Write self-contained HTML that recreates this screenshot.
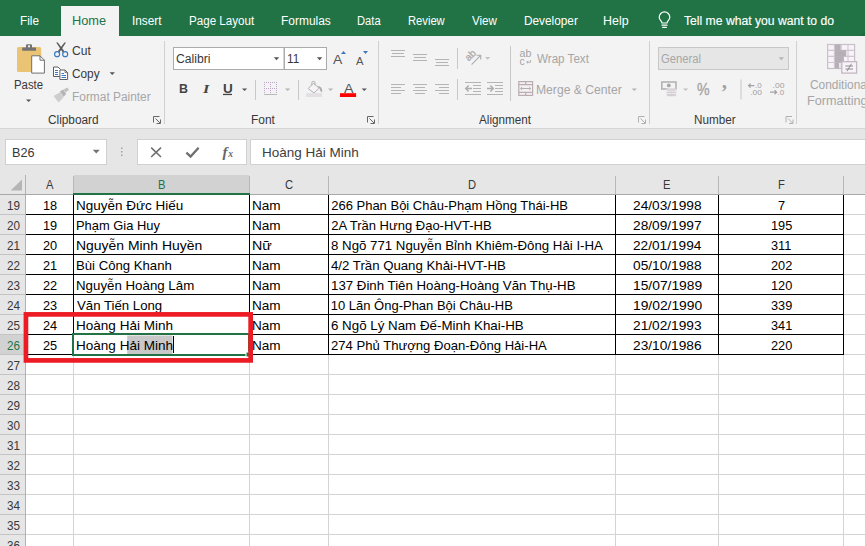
<!DOCTYPE html>
<html lang="vi"><head><meta charset="utf-8"><title>Excel</title>
<style>
html,body{margin:0;padding:0;}
body{width:865px;height:546px;overflow:hidden;background:#e6e6e6;font-family:"Liberation Sans", sans-serif;position:relative;}
.t{position:absolute;white-space:nowrap;transform-origin:0 0;}
.a{position:absolute;}
</style></head>
<body>
<div class="a" style="left:0px;top:0px;width:865px;height:36px;background:#217346;"></div>
<div class="a" style="left:61px;top:6px;width:58px;height:30px;background:#f3f3f3;"></div>
<div class="a" style="left:0px;top:36px;width:865px;height:92px;background:#f3f3f3;"></div>
<div class="a" style="left:0px;top:128px;width:865px;height:1px;background:#d6d6d6;"></div>
<div class="a" style="left:5px;top:139px;width:102px;height:26px;background:#fff;box-sizing:border-box;border:1px solid #d0d0d0;"></div>
<div class="a" style="left:137px;top:139px;width:110px;height:26px;background:#fff;box-sizing:border-box;border:1px solid #d0d0d0;"></div>
<div class="a" style="left:250px;top:139px;width:615px;height:26px;background:#fff;box-sizing:border-box;border:1px solid #d0d0d0;border-right:none;"></div>
<div class="a" style="left:26px;top:195px;width:839px;height:351px;background:#fff;"></div>
<div class="a" style="left:0px;top:175px;width:865px;height:20px;background:#e6e6e6;"></div>
<div class="a" style="left:0px;top:195px;width:26px;height:351px;background:#e6e6e6;"></div>
<div class="a" style="left:74px;top:175px;width:175px;height:20px;background:#d2d2d2;"></div>
<div class="a" style="left:0px;top:335px;width:25px;height:19px;background:#d2d2d2;"></div>
<svg class="a" style="left:0;top:0" width="865" height="546" viewBox="0 0 865 546" shape-rendering="auto">
<rect x="73" y="195" width="1" height="351" fill="#d4d4d4"/>
<rect x="249" y="195" width="1" height="351" fill="#d4d4d4"/>
<rect x="328" y="195" width="1" height="351" fill="#d4d4d4"/>
<rect x="615" y="195" width="1" height="351" fill="#d4d4d4"/>
<rect x="718" y="195" width="1" height="351" fill="#d4d4d4"/>
<rect x="843" y="195" width="1" height="351" fill="#d4d4d4"/>
<rect x="26" y="214" width="839" height="1" fill="#d4d4d4"/>
<rect x="26" y="234" width="839" height="1" fill="#d4d4d4"/>
<rect x="26" y="254" width="839" height="1" fill="#d4d4d4"/>
<rect x="26" y="274" width="839" height="1" fill="#d4d4d4"/>
<rect x="26" y="294" width="839" height="1" fill="#d4d4d4"/>
<rect x="26" y="314" width="839" height="1" fill="#d4d4d4"/>
<rect x="26" y="334" width="839" height="1" fill="#d4d4d4"/>
<rect x="26" y="354" width="839" height="1" fill="#d4d4d4"/>
<rect x="26" y="374" width="839" height="1" fill="#d4d4d4"/>
<rect x="26" y="394" width="839" height="1" fill="#d4d4d4"/>
<rect x="26" y="414" width="839" height="1" fill="#d4d4d4"/>
<rect x="26" y="434" width="839" height="1" fill="#d4d4d4"/>
<rect x="26" y="454" width="839" height="1" fill="#d4d4d4"/>
<rect x="26" y="474" width="839" height="1" fill="#d4d4d4"/>
<rect x="26" y="494" width="839" height="1" fill="#d4d4d4"/>
<rect x="26" y="514" width="839" height="1" fill="#d4d4d4"/>
<rect x="26" y="534" width="839" height="1" fill="#d4d4d4"/>
<rect x="26" y="554" width="839" height="1" fill="#d4d4d4"/>
<rect x="0" y="214" width="25" height="1" fill="#c4c4c4"/>
<rect x="0" y="234" width="25" height="1" fill="#c4c4c4"/>
<rect x="0" y="254" width="25" height="1" fill="#c4c4c4"/>
<rect x="0" y="274" width="25" height="1" fill="#c4c4c4"/>
<rect x="0" y="294" width="25" height="1" fill="#c4c4c4"/>
<rect x="0" y="314" width="25" height="1" fill="#c4c4c4"/>
<rect x="0" y="334" width="25" height="1" fill="#c4c4c4"/>
<rect x="0" y="354" width="25" height="1" fill="#c4c4c4"/>
<rect x="0" y="374" width="25" height="1" fill="#c4c4c4"/>
<rect x="0" y="394" width="25" height="1" fill="#c4c4c4"/>
<rect x="0" y="414" width="25" height="1" fill="#c4c4c4"/>
<rect x="0" y="434" width="25" height="1" fill="#c4c4c4"/>
<rect x="0" y="454" width="25" height="1" fill="#c4c4c4"/>
<rect x="0" y="474" width="25" height="1" fill="#c4c4c4"/>
<rect x="0" y="494" width="25" height="1" fill="#c4c4c4"/>
<rect x="0" y="514" width="25" height="1" fill="#c4c4c4"/>
<rect x="0" y="534" width="25" height="1" fill="#c4c4c4"/>
<rect x="0" y="554" width="25" height="1" fill="#c4c4c4"/>
<rect x="25" y="175" width="1" height="371" fill="#b2b2b2"/>
<rect x="73" y="176" width="1" height="19" fill="#b8b8b8"/>
<rect x="249" y="176" width="1" height="19" fill="#b8b8b8"/>
<rect x="328" y="176" width="1" height="19" fill="#b8b8b8"/>
<rect x="615" y="176" width="1" height="19" fill="#b8b8b8"/>
<rect x="718" y="176" width="1" height="19" fill="#b8b8b8"/>
<rect x="843" y="176" width="1" height="19" fill="#b8b8b8"/>
<rect x="0" y="194" width="865" height="1" fill="#a8a8a8"/>
<path d="M22 179.6 L22 190.6 L10.6 190.6 Z" fill="#b5b5b5"/>
<rect x="73" y="195" width="1" height="160" fill="#000"/>
<rect x="249" y="195" width="1" height="160" fill="#000"/>
<rect x="328" y="195" width="1" height="160" fill="#000"/>
<rect x="615" y="195" width="1" height="160" fill="#000"/>
<rect x="718" y="195" width="1" height="160" fill="#000"/>
<rect x="843" y="195" width="1" height="160" fill="#000"/>
<rect x="26" y="214" width="818" height="1" fill="#000"/>
<rect x="26" y="234" width="818" height="1" fill="#000"/>
<rect x="26" y="254" width="818" height="1" fill="#000"/>
<rect x="26" y="274" width="818" height="1" fill="#000"/>
<rect x="26" y="294" width="818" height="1" fill="#000"/>
<rect x="26" y="314" width="818" height="1" fill="#000"/>
<rect x="26" y="334" width="818" height="1" fill="#000"/>
<rect x="26" y="354" width="818" height="1" fill="#000"/>
<rect x="73" y="193" width="177" height="2" fill="#217346"/>
<rect x="127.2" y="335.5" width="45.3" height="18.5" fill="#c8c8c8"/>
<rect x="73" y="334" width="176" height="21" fill="none" stroke="#217346" stroke-width="2"/>
<rect x="246" y="352" width="5" height="5" fill="#217346" stroke="#fff" stroke-width="1"/>
<g fill="none" stroke="#fff" stroke-width="1.2" stroke-linecap="round"><path d="M662 23 C662 21 659.2 20 659.2 17.2 A5.3 5.3 0 0 1 669.8 17.2 C669.8 20 667 21 667 23 Z"/><path d="M662 25.2 H667 M662.7 27.4 H666.3"/></g>
<clipPath id="gb"><rect x="0" y="0" width="865" height="36"/></clipPath><circle cx="869" cy="41" r="10" fill="#1d6a3f" clip-path="url(#gb)"/>
<rect x="164" y="41" width="1" height="83" fill="#d0d0d0"/>
<rect x="378" y="41" width="1" height="83" fill="#d0d0d0"/>
<rect x="649" y="41" width="1" height="83" fill="#d0d0d0"/>
<rect x="796" y="41" width="1" height="83" fill="#d0d0d0"/>
<rect x="17" y="47" width="24.2" height="25" rx="1.6" fill="#eac374"/>
<path d="M26 47.4 V45.4 Q26 44.2 27.2 44.2 H30.8 Q32 44.2 32 45.4 V47.4 H36 V50.8 H22.2 V47.4 Z" fill="#737373"/>
<rect x="28" y="45.4" width="2" height="1.9" fill="#f3f3f3"/>
<path d="M31.7 55.8 H40 L44.4 60.2 V73.1 H31.7 Z" fill="#fff" stroke="#6f6f6f" stroke-width="1"/>
<path d="M40 55.8 V60.2 H44.4" fill="none" stroke="#6f6f6f" stroke-width="1"/>
<path d="M26 99.4 L31.2 99.4 L28.6 102.1 Z" fill="#555"/>
<g fill="#5a5a5a"><path d="M56.2 42.6 L57.8 42.4 L64.4 51.2 L62.8 52.4 Z"/><path d="M66 42.6 L64.4 42.4 L57.8 51.2 L59.4 52.4 Z"/></g>
<g fill="none" stroke="#3b79c3" stroke-width="1.2"><circle cx="57.1" cy="54.2" r="2.5"/><circle cx="65.2" cy="54.2" r="2.5"/></g>
<path d="M53.5 67 H58 L60.5 69.5 V76.5 H53.5 Z" fill="#fff" stroke="#5f5f5f" stroke-width="1"/>
<path d="M59.9 70 H65 L67.6 72.6 V79.5 H59.9 Z" fill="#fff" stroke="#5f5f5f" stroke-width="1"/>
<path d="M65 70 V72.6 H67.6" fill="none" stroke="#5f5f5f" stroke-width=".8"/>
<g stroke="#3b79c3" stroke-width="1"><path d="M55 70.5 H58 M55 72.5 H58 M55 74.5 H58"/><path d="M61.5 73.5 H64 M61.5 75.5 H66 M61.5 77.5 H66"/></g>
<path d="M109.6 72.3 L114.9 72.3 L112.25 75 Z" fill="#555"/>
<path d="M53.6 96 L60 92.2 L63.6 97.2 L58.6 102.6 Z" fill="#cfcdcd"/>
<path d="M59.8 91.6 L63.2 89.6 L66.2 94 L63.6 96.8 Z" fill="#b5b5b5"/>
<path d="M63.6 89.6 L67.4 87.6 L69 90 L65.6 92.6 Z" fill="#c2c2c2"/>
<path d="M153.5 122.5 V116.5 H159.5" fill="none" stroke="#666" stroke-width="1"/>
<path d="M155.5 118.5 L160 123 M160.5 119.5 V123.5 H156.5" fill="none" stroke="#666" stroke-width="1"/>
<rect x="173.5" y="47.5" width="110.5" height="22" fill="#fff" stroke="#ababab"/>
<rect x="284.5" y="47.5" width="42" height="22" fill="#fff" stroke="#ababab"/>
<path d="M273.8 57.2 L279.2 57.2 L276.5 60.2 Z" fill="#555"/>
<path d="M316.9 57.2 L322.3 57.2 L319.6 60.2 Z" fill="#555"/>
<path d="M241.9 88.4 L247.2 88.4 L244.55 91.1 Z" fill="#555"/>
<path d="M285 88.4 L290.3 88.4 L287.65 91.1 Z" fill="#b4b4b4"/>
<path d="M328 88.4 L333.2 88.4 L330.6 91.1 Z" fill="#b4b4b4"/>
<path d="M361.6 88.4 L366.9 88.4 L364.25 91.1 Z" fill="#555"/>
<rect x="223" y="93.8" width="9" height="1.3" fill="#444"/>
<rect x="255" y="80" width="1" height="20" fill="#c8c8c8"/>
<rect x="298" y="80" width="1" height="20" fill="#c8c8c8"/>
<g stroke="#bfa6c8" stroke-width="1" stroke-dasharray="1 1" fill="none"><path d="M264 82.5 H277 M264 88.5 H277 M264.5 82 V94 M270.5 82 V94 M276.5 82 V94"/></g>
<rect x="264" y="94" width="13" height="1" fill="#b9b9b9"/>
<path d="M308.2 88.6 L313.4 83.2 L319.2 88.2 L314 93 Z" fill="#f6f2f6" stroke="#b2b2b2" stroke-width="1" stroke-linejoin="round"/>
<path d="M311.8 85.6 V82.8 Q311.8 81.3 313.4 81.3 Q315 81.3 315 82.9 V85.2" fill="none" stroke="#b2b2b2" stroke-width="1"/>
<path d="M317.6 85.8 Q322.8 86.4 322.2 92.4 Q319.8 91.6 319.6 88.4 Z" fill="#adadad"/>
<rect x="306.1" y="93.2" width="15.9" height="3.8" fill="#e3dfe3"/>
<path d="M341 53.9 L346 53.9 L343.5 51.1 Z" fill="#3b79c3"/>
<path d="M363 51.1 L368 51.1 L365.5 53.9 Z" fill="#3b79c3"/>
<rect x="340" y="93.2" width="16.1" height="3.8" fill="#ff0000"/>
<path d="M367.5 122.5 V116.5 H373.5" fill="none" stroke="#666" stroke-width="1"/>
<path d="M369.5 118.5 L374 123 M374.5 119.5 V123.5 H370.5" fill="none" stroke="#666" stroke-width="1"/>
<rect x="391" y="50" width="14" height="1" fill="#b4b4b4"/>
<rect x="392" y="53" width="12" height="1" fill="#b4b4b4"/>
<rect x="391" y="56" width="14" height="1" fill="#b4b4b4"/>
<rect x="413" y="54" width="14" height="1" fill="#b4b4b4"/>
<rect x="414" y="57" width="12" height="1" fill="#b4b4b4"/>
<rect x="413" y="60" width="14" height="1" fill="#b4b4b4"/>
<rect x="435" y="59" width="14" height="1" fill="#b4b4b4"/>
<rect x="436" y="62" width="12" height="1" fill="#b4b4b4"/>
<rect x="435" y="65" width="14" height="1" fill="#b4b4b4"/>
<rect x="457" y="48" width="1" height="21" fill="#c8c8c8"/>
<rect x="457" y="79" width="1" height="21" fill="#c8c8c8"/>
<rect x="510" y="46" width="1" height="55" fill="#c8c8c8"/>
<rect x="391" y="84" width="14" height="1" fill="#b4b4b4"/>
<rect x="413" y="84" width="14" height="1" fill="#b4b4b4"/>
<rect x="435" y="84" width="14" height="1" fill="#b4b4b4"/>
<rect x="391" y="87" width="10" height="1" fill="#b4b4b4"/>
<rect x="415" y="87" width="10" height="1" fill="#b4b4b4"/>
<rect x="439" y="87" width="10" height="1" fill="#b4b4b4"/>
<rect x="391" y="90" width="14" height="1" fill="#b4b4b4"/>
<rect x="413" y="90" width="14" height="1" fill="#b4b4b4"/>
<rect x="435" y="90" width="14" height="1" fill="#b4b4b4"/>
<rect x="391" y="93" width="10" height="1" fill="#b4b4b4"/>
<rect x="415" y="93" width="10" height="1" fill="#b4b4b4"/>
<rect x="439" y="93" width="10" height="1" fill="#b4b4b4"/>
<text x="0" y="0" font-size="10" fill="#a9a9a9" font-family="Liberation Sans, sans-serif" stroke="#a9a9a9" stroke-width=".25" transform="translate(468.8 61.6) rotate(-45)">ab</text>
<path d="M471.6 64.6 L480.4 55.6 M476.6 55.3 H480.7 V59.4" fill="none" stroke="#adadad" stroke-width="1.1"/>
<path d="M485 57 L490.3 57 L487.65 59.8 Z" fill="#c2c2c2"/>
<rect x="465" y="82" width="16" height="1" fill="#b4b4b4"/>
<rect x="465" y="94" width="16" height="1" fill="#b4b4b4"/>
<rect x="473" y="85" width="8" height="1" fill="#b4b4b4"/>
<rect x="473" y="88" width="8" height="1" fill="#b4b4b4"/>
<rect x="473" y="91" width="8" height="1" fill="#b4b4b4"/>
<path d="M472 88.5 H466 M468.6 85.6 L465.8 88.5 L468.6 91.4" fill="none" stroke="#adadad" stroke-width="1.5"/>
<rect x="487" y="82" width="16" height="1" fill="#b4b4b4"/>
<rect x="487" y="94" width="16" height="1" fill="#b4b4b4"/>
<rect x="495" y="85" width="8" height="1" fill="#b4b4b4"/>
<rect x="495" y="88" width="8" height="1" fill="#b4b4b4"/>
<rect x="495" y="91" width="8" height="1" fill="#b4b4b4"/>
<path d="M487 88.5 H493 M490.4 85.6 L493.2 88.5 L490.4 91.4" fill="none" stroke="#adadad" stroke-width="1.5"/>
<text x="519.6" y="57.4" font-size="10.5" fill="#a3a3a3" font-family="Liberation Sans, sans-serif" textLength="11.8" lengthAdjust="spacingAndGlyphs">ab</text>
<text x="519.6" y="64.9" font-size="10.5" fill="#a3a3a3" font-family="Liberation Sans, sans-serif">c</text>
<path d="M530.6 60.2 V62.2 H526.8 M528.2 60.9 L526.8 62.2 L528.2 63.5" fill="none" stroke="#adadad" stroke-width="1"/>
<g fill="#f7f0f3" stroke="#b7adb2" stroke-width="1.2"><rect x="518.8" y="81.6" width="13.8" height="13.8"/></g>
<path d="M518.8 84.6 H532.6 M518.8 92.4 H532.6 M525.7 81.6 V84.6 M525.7 92.4 V95.4" fill="none" stroke="#b7adb2" stroke-width="1.2"/>
<path d="M520.6 88.5 H530.8 M522.2 87 L520.6 88.5 L522.2 90 M529.2 87 L530.8 88.5 L529.2 90" fill="none" stroke="#b2b2b2" stroke-width="1"/>
<path d="M631.6 88.4 L637 88.4 L634.3 91.1 Z" fill="#b4b4b4"/>
<path d="M638.5 122.5 V116.5 H644.5" fill="none" stroke="#b0b0b0" stroke-width="1"/>
<path d="M640.5 118.5 L645 123 M645.5 119.5 V123.5 H641.5" fill="none" stroke="#b0b0b0" stroke-width="1"/>
<rect x="658.5" y="47.5" width="130" height="22" fill="#e6e6e6" stroke="#c8c8c8"/>
<path d="M778.7 57.2 L784 57.2 L781.35 60.2 Z" fill="#b4b4b4"/>
<rect x="661.8" y="82" width="14.2" height="7" fill="#f3f3f3" stroke="#b3b3b3" stroke-width="1.6"/>
<circle cx="668.8" cy="85.4" r="1.9" fill="#a6a6a6"/>
<g fill="#d4ced4" stroke="#f3f3f3" stroke-width=".7"><ellipse cx="671.4" cy="90.2" rx="5.4" ry="1.7"/><ellipse cx="671.4" cy="92.6" rx="5.4" ry="1.7"/><ellipse cx="671.4" cy="95" rx="5.4" ry="1.7"/></g>
<path d="M682.9 88.4 L688.2 88.4 L685.55 91.1 Z" fill="#c2c2c2"/>
<rect x="740.5" y="79.5" width="1" height="20.0" fill="#c8c8c8"/>
<text x="755" y="88" font-size="8" fill="#9e9e9e" font-family="Liberation Sans, sans-serif">.0</text>
<text x="750.2" y="95.2" font-size="8" fill="#9e9e9e" font-family="Liberation Sans, sans-serif" textLength="11.8" lengthAdjust="spacingAndGlyphs">.00</text>
<path d="M754.4 85.6 H748.6 M750.6 83.6 L748.6 85.6 L750.6 87.6" fill="none" stroke="#a3a3a3" stroke-width="1.3"/>
<text x="772.6" y="88" font-size="8" fill="#9e9e9e" font-family="Liberation Sans, sans-serif" textLength="11.8" lengthAdjust="spacingAndGlyphs">.00</text>
<text x="777.6" y="95.2" font-size="8" fill="#9e9e9e" font-family="Liberation Sans, sans-serif">.0</text>
<path d="M770 92.2 H776.6 M774.6 90.2 L776.6 92.2 L774.6 94.2" fill="none" stroke="#a3a3a3" stroke-width="1.3"/>
<text x="697" y="95" font-size="16" fill="#a3a3a3" stroke="#a3a3a3" stroke-width=".3" font-family="Liberation Sans, sans-serif" textLength="12.6" lengthAdjust="spacingAndGlyphs">%</text>
<text x="721.8" y="88.2" font-size="21" font-weight="bold" fill="#a3a3a3" font-family="Liberation Serif, serif">,</text>
<path d="M786.0 122.5 V116.5 H792.0" fill="none" stroke="#b0b0b0" stroke-width="1"/>
<path d="M788.0 118.5 L792.5 123 M793.0 119.5 V123.5 H789.0" fill="none" stroke="#b0b0b0" stroke-width="1"/>
<rect x="827.6" y="44.5" width="27" height="24" fill="#f8f3f8" stroke="#c8bfc8" stroke-width="1.2"/>
<path d="M827.6 50.4 H854.6 M827.6 56.4 H854.6 M827.6 62.5 H854.6 M834.4 44.5 V68.5 M841.2 44.5 V68.5 M848 44.5 V68.5" stroke="#cfc6cf" stroke-width="1.1" fill="none"/>
<g fill="#b6b0b6"><rect x="835" y="44.5" width="5.6" height="5.8"/><rect x="835" y="50.3" width="11.2" height="6"/><rect x="835" y="56.3" width="8.9" height="6.2"/><rect x="835" y="62.5" width="4.2" height="6"/></g>
<rect x="841.8" y="61.7" width="14.8" height="11.4" fill="#f8f3f8" stroke="#c2b8c2" stroke-width="1.3"/>
<path d="M845.4 66 H853 M845.4 69 H853 M851.4 63.8 L847 71.2" stroke="#8c8c8c" stroke-width="1" fill="none"/>
<path d="M92.8 149.8 L99.8 149.8 L96.3 153.6 Z" fill="#757575"/>
<g fill="#a2a2a2"><rect x="121" y="147.5" width="1.5" height="1.5"/><rect x="121" y="151" width="1.5" height="1.5"/><rect x="121" y="154.5" width="1.5" height="1.5"/></g>
<path d="M151.2 147.6 L161 157 M161 147.6 L151.2 157" stroke="#6f6f6f" stroke-width="1.6" fill="none"/>
<path d="M186.4 152.6 L190.6 156.6 L198.6 147.8" stroke="#6f6f6f" stroke-width="2.3" fill="none"/>
<text x="222.6" y="156.6" font-size="15" font-style="italic" font-weight="bold" fill="#666" font-family="Liberation Serif, serif">f</text>
<text x="228.2" y="157.2" font-size="9.5" font-style="italic" font-weight="bold" fill="#666" font-family="Liberation Serif, serif">x</text>
</svg>
<span class="t" style="left:19.72px;top:15.00px;font-size:12px;line-height:12px;color:#ffffff;transform:scaleX(0.9833);">File</span>
<span class="t" style="left:72.43px;top:15.00px;font-size:12px;line-height:12px;color:#217346;transform:scaleX(1.0656);">Home</span>
<span class="t" style="left:132.41px;top:15.00px;font-size:12px;line-height:12px;color:#ffffff;transform:scaleX(0.9862);">Insert</span>
<span class="t" style="left:188.73px;top:15.00px;font-size:12px;line-height:12px;color:#ffffff;transform:scaleX(0.9675);">Page Layout</span>
<span class="t" style="left:280.70px;top:15.00px;font-size:12px;line-height:12px;color:#ffffff;transform:scaleX(0.9959);">Formulas</span>
<span class="t" style="left:356.87px;top:15.00px;font-size:12px;line-height:12px;color:#ffffff;transform:scaleX(0.9306);">Data</span>
<span class="t" style="left:407.87px;top:15.00px;font-size:12px;line-height:12px;color:#ffffff;transform:scaleX(0.9325);">Review</span>
<span class="t" style="left:472.10px;top:15.00px;font-size:12px;line-height:12px;color:#ffffff;transform:scaleX(0.9670);">View</span>
<span class="t" style="left:523.81px;top:15.00px;font-size:12px;line-height:12px;color:#ffffff;transform:scaleX(0.9850);">Developer</span>
<span class="t" style="left:603.46px;top:15.00px;font-size:12px;line-height:12px;color:#ffffff;transform:scaleX(1.0366);">Help</span>
<span class="t" style="left:684.35px;top:15.00px;font-size:12px;line-height:12px;color:#ffffff;transform:scaleX(1.0132);-webkit-text-stroke:0.15px #fff;">Tell me what you want to do</span>
<span class="t" style="left:14.45px;top:79.00px;font-size:12px;line-height:12px;color:#383838;transform:scaleX(0.9470);">Paste</span>
<span class="t" style="left:72.20px;top:44.60px;font-size:12px;line-height:12px;color:#383838;transform:scaleX(1.0056);">Cut</span>
<span class="t" style="left:72.21px;top:67.80px;font-size:12px;line-height:12px;color:#383838;transform:scaleX(0.9855);">Copy</span>
<span class="t" style="left:71.71px;top:91.00px;font-size:12px;line-height:12px;color:#a6a6a6;transform:scaleX(0.9917);">Format Painter</span>
<span class="t" style="left:48.21px;top:113.70px;font-size:12px;line-height:12px;color:#383838;transform:scaleX(0.9851);">Clipboard</span>
<span class="t" style="left:175.99px;top:52.90px;font-size:12px;line-height:12px;color:#383838;transform:scaleX(1.0137);">Calibri</span>
<span class="t" style="left:286.89px;top:52.90px;font-size:12px;line-height:12px;color:#383838;transform:scaleX(0.9800);">11</span>
<span class="t" style="left:178.65px;top:82.90px;font-size:12.5px;line-height:12.5px;color:#444444;transform:scaleX(0.9935);font-weight:bold;">B</span>
<span class="t" style="left:202.50px;top:81.90px;font-size:13.5px;line-height:13.5px;color:#444444;transform:scaleX(1.2000);font-weight:bold;font-style:italic;font-family:'Liberation Serif',serif;">I</span>
<span class="t" style="left:222.55px;top:82.90px;font-size:12px;line-height:12px;color:#444444;transform:scaleX(1.1310);font-weight:bold;">U</span>
<span class="t" style="left:250.90px;top:113.70px;font-size:12px;line-height:12px;color:#383838;transform:scaleX(0.9957);">Font</span>
<span class="t" style="left:333.40px;top:52.80px;font-size:13.5px;line-height:13.5px;color:#555555;transform:scaleX(1.0333);">A</span>
<span class="t" style="left:356.20px;top:55.80px;font-size:11px;line-height:11px;color:#555555;transform:scaleX(1.0207);">A</span>
<span class="t" style="left:343.80px;top:81.90px;font-size:13.4px;line-height:13.4px;color:#555555;transform:scaleX(1.0667);">A</span>
<span class="t" style="left:537.40px;top:53.20px;font-size:12px;line-height:12px;color:#a6a6a6;transform:scaleX(0.9682);">Wrap Text</span>
<span class="t" style="left:536.39px;top:84.20px;font-size:12px;line-height:12px;color:#a6a6a6;transform:scaleX(1.0120);">Merge &amp; Center</span>
<span class="t" style="left:479.40px;top:113.70px;font-size:12px;line-height:12px;color:#383838;transform:scaleX(0.9728);">Alignment</span>
<span class="t" style="left:661.13px;top:53.10px;font-size:12px;line-height:12px;color:#a6a6a6;transform:scaleX(0.9398);">General</span>
<span class="t" style="left:693.63px;top:113.70px;font-size:12px;line-height:12px;color:#383838;transform:scaleX(0.9735);">Number</span>
<span class="t" style="left:810.40px;top:79.00px;font-size:12px;line-height:12px;color:#a6a6a6;transform:scaleX(0.9923);">Conditional</span>
<span class="t" style="left:807.24px;top:94.60px;font-size:12px;line-height:12px;color:#a6a6a6;transform:scaleX(1.0565);">Formatting</span>
<span class="t" style="left:11.75px;top:146.60px;font-size:12px;line-height:12px;color:#383838;transform:scaleX(1.0550);">B26</span>
<span class="t" style="left:262.36px;top:145.60px;font-size:13px;line-height:13px;color:#404040;transform:scaleX(1.0393);">Hoàng Hải Minh</span>
<span class="t" style="left:45.95px;top:177.60px;font-size:13px;line-height:13px;color:#383838;transform:scaleX(0.8600);">A</span>
<span class="t" style="left:285.31px;top:177.60px;font-size:13px;line-height:13px;color:#383838;transform:scaleX(0.8600);">C</span>
<span class="t" style="left:467.81px;top:177.60px;font-size:13px;line-height:13px;color:#383838;transform:scaleX(0.8600);">D</span>
<span class="t" style="left:662.82px;top:177.60px;font-size:13px;line-height:13px;color:#383838;transform:scaleX(0.8600);">E</span>
<span class="t" style="left:777.75px;top:177.60px;font-size:13px;line-height:13px;color:#383838;transform:scaleX(0.8600);">F</span>
<span class="t" style="left:157.53px;top:177.60px;font-size:13px;line-height:13px;color:#217346;transform:scaleX(0.8600);">B</span>
<span class="t" style="left:7.24px;top:199.00px;font-size:13px;line-height:13px;color:#383838;transform:scaleX(0.9000);">19</span>
<span class="t" style="left:7.24px;top:219.00px;font-size:13px;line-height:13px;color:#383838;transform:scaleX(0.9000);">20</span>
<span class="t" style="left:7.24px;top:239.00px;font-size:13px;line-height:13px;color:#383838;transform:scaleX(0.9000);">21</span>
<span class="t" style="left:7.24px;top:259.00px;font-size:13px;line-height:13px;color:#383838;transform:scaleX(0.9000);">22</span>
<span class="t" style="left:7.24px;top:279.00px;font-size:13px;line-height:13px;color:#383838;transform:scaleX(0.9000);">23</span>
<span class="t" style="left:7.24px;top:299.00px;font-size:13px;line-height:13px;color:#383838;transform:scaleX(0.9000);">24</span>
<span class="t" style="left:7.24px;top:319.00px;font-size:13px;line-height:13px;color:#383838;transform:scaleX(0.9000);">25</span>
<span class="t" style="left:7.24px;top:339.00px;font-size:13px;line-height:13px;color:#217346;transform:scaleX(0.9000);">26</span>
<span class="t" style="left:7.24px;top:359.00px;font-size:13px;line-height:13px;color:#383838;transform:scaleX(0.9000);">27</span>
<span class="t" style="left:7.24px;top:379.00px;font-size:13px;line-height:13px;color:#383838;transform:scaleX(0.9000);">28</span>
<span class="t" style="left:7.24px;top:399.00px;font-size:13px;line-height:13px;color:#383838;transform:scaleX(0.9000);">29</span>
<span class="t" style="left:7.24px;top:419.00px;font-size:13px;line-height:13px;color:#383838;transform:scaleX(0.9000);">30</span>
<span class="t" style="left:7.24px;top:439.00px;font-size:13px;line-height:13px;color:#383838;transform:scaleX(0.9000);">31</span>
<span class="t" style="left:7.24px;top:459.00px;font-size:13px;line-height:13px;color:#383838;transform:scaleX(0.9000);">32</span>
<span class="t" style="left:7.24px;top:479.00px;font-size:13px;line-height:13px;color:#383838;transform:scaleX(0.9000);">33</span>
<span class="t" style="left:7.24px;top:499.00px;font-size:13px;line-height:13px;color:#383838;transform:scaleX(0.9000);">34</span>
<span class="t" style="left:7.24px;top:519.00px;font-size:13px;line-height:13px;color:#383838;transform:scaleX(0.9000);">35</span>
<span class="t" style="left:7.24px;top:539.00px;font-size:13px;line-height:13px;color:#383838;transform:scaleX(0.9000);">36</span>
<span class="t" style="left:42.91px;top:199.00px;font-size:13px;line-height:13px;color:#000000;transform:scaleX(0.9800);">18</span>
<span class="t" style="left:76.16px;top:199.00px;font-size:13px;line-height:13px;color:#000000;transform:scaleX(1.0374);">Nguyễn Đức Hiếu</span>
<span class="t" style="left:252.46px;top:199.00px;font-size:13px;line-height:13px;color:#000000;transform:scaleX(1.0447);">Nam</span>
<span class="t" style="left:331.20px;top:199.00px;font-size:13px;line-height:13px;color:#000000;">266 Phan Bội Châu-Phạm Hồng Thái-HB</span>
<span class="t" style="left:633.47px;top:199.00px;font-size:13px;line-height:13px;color:#000000;transform:scaleX(1.0547);">24/03/1998</span>
<span class="t" style="left:777.96px;top:199.00px;font-size:13px;line-height:13px;color:#000000;transform:scaleX(0.9800);">7</span>
<span class="t" style="left:42.91px;top:219.00px;font-size:13px;line-height:13px;color:#000000;transform:scaleX(0.9800);">19</span>
<span class="t" style="left:76.21px;top:219.00px;font-size:13px;line-height:13px;color:#000000;transform:scaleX(0.9916);">Phạm Gia Huy</span>
<span class="t" style="left:252.46px;top:219.00px;font-size:13px;line-height:13px;color:#000000;transform:scaleX(1.0447);">Nam</span>
<span class="t" style="left:331.20px;top:219.00px;font-size:13px;line-height:13px;color:#000000;">2A Trần Hưng Đạo-HVT-HB</span>
<span class="t" style="left:633.47px;top:219.00px;font-size:13px;line-height:13px;color:#000000;transform:scaleX(1.0547);">28/09/1997</span>
<span class="t" style="left:770.87px;top:219.00px;font-size:13px;line-height:13px;color:#000000;transform:scaleX(0.9800);">195</span>
<span class="t" style="left:42.91px;top:239.00px;font-size:13px;line-height:13px;color:#000000;transform:scaleX(0.9800);">20</span>
<span class="t" style="left:76.13px;top:239.00px;font-size:13px;line-height:13px;color:#000000;transform:scaleX(1.0716);">Nguyễn Minh Huyền</span>
<span class="t" style="left:252.41px;top:239.00px;font-size:13px;line-height:13px;color:#000000;transform:scaleX(1.0925);">Nữ</span>
<span class="t" style="left:331.19px;top:239.00px;font-size:13px;line-height:13px;color:#000000;transform:scaleX(1.0199);">8 Ngõ 771 Nguyễn Bỉnh Khiêm-Đông Hải I-HA</span>
<span class="t" style="left:633.47px;top:239.00px;font-size:13px;line-height:13px;color:#000000;transform:scaleX(1.0506);">22/01/1994</span>
<span class="t" style="left:771.34px;top:239.00px;font-size:13px;line-height:13px;color:#000000;transform:scaleX(0.9800);">311</span>
<span class="t" style="left:42.91px;top:259.00px;font-size:13px;line-height:13px;color:#000000;transform:scaleX(0.9800);">21</span>
<span class="t" style="left:76.19px;top:259.00px;font-size:13px;line-height:13px;color:#000000;transform:scaleX(1.0113);">Bùi Công Khanh</span>
<span class="t" style="left:252.46px;top:259.00px;font-size:13px;line-height:13px;color:#000000;transform:scaleX(1.0447);">Nam</span>
<span class="t" style="left:331.45px;top:259.00px;font-size:13px;line-height:13px;color:#000000;transform:scaleX(1.0164);">4/2 Trần Quang Khải-HVT-HB</span>
<span class="t" style="left:633.47px;top:259.00px;font-size:13px;line-height:13px;color:#000000;transform:scaleX(1.0547);">05/10/1988</span>
<span class="t" style="left:770.87px;top:259.00px;font-size:13px;line-height:13px;color:#000000;transform:scaleX(0.9800);">202</span>
<span class="t" style="left:42.91px;top:279.00px;font-size:13px;line-height:13px;color:#000000;transform:scaleX(0.9800);">22</span>
<span class="t" style="left:76.18px;top:279.00px;font-size:13px;line-height:13px;color:#000000;transform:scaleX(1.0224);">Nguyễn Hoàng Lâm</span>
<span class="t" style="left:252.46px;top:279.00px;font-size:13px;line-height:13px;color:#000000;transform:scaleX(1.0447);">Nam</span>
<span class="t" style="left:330.68px;top:279.00px;font-size:13px;line-height:13px;color:#000000;transform:scaleX(1.0202);">137 Đinh Tiên Hoàng-Hoàng Văn Thụ-HB</span>
<span class="t" style="left:632.94px;top:279.00px;font-size:13px;line-height:13px;color:#000000;transform:scaleX(1.0630);">15/07/1989</span>
<span class="t" style="left:770.87px;top:279.00px;font-size:13px;line-height:13px;color:#000000;transform:scaleX(0.9800);">120</span>
<span class="t" style="left:42.91px;top:299.00px;font-size:13px;line-height:13px;color:#000000;transform:scaleX(0.9800);">23</span>
<span class="t" style="left:77.20px;top:299.00px;font-size:13px;line-height:13px;color:#000000;transform:scaleX(1.0157);">Văn Tiến Long</span>
<span class="t" style="left:252.46px;top:299.00px;font-size:13px;line-height:13px;color:#000000;transform:scaleX(1.0447);">Nam</span>
<span class="t" style="left:330.70px;top:299.00px;font-size:13px;line-height:13px;color:#000000;">10 Lãn Ông-Phan Bội Châu-HB</span>
<span class="t" style="left:632.94px;top:299.00px;font-size:13px;line-height:13px;color:#000000;transform:scaleX(1.0630);">19/02/1990</span>
<span class="t" style="left:770.87px;top:299.00px;font-size:13px;line-height:13px;color:#000000;transform:scaleX(0.9800);">339</span>
<span class="t" style="left:42.91px;top:319.00px;font-size:13px;line-height:13px;color:#000000;transform:scaleX(0.9800);">24</span>
<span class="t" style="left:76.16px;top:319.00px;font-size:13px;line-height:13px;color:#000000;transform:scaleX(1.0415);">Hoàng Hải Minh</span>
<span class="t" style="left:252.46px;top:319.00px;font-size:13px;line-height:13px;color:#000000;transform:scaleX(1.0447);">Nam</span>
<span class="t" style="left:330.93px;top:319.00px;font-size:13px;line-height:13px;color:#000000;transform:scaleX(1.0257);">6 Ngõ Lý Nam Đế-Minh Khai-HB</span>
<span class="t" style="left:633.47px;top:319.00px;font-size:13px;line-height:13px;color:#000000;transform:scaleX(1.0547);">21/02/1993</span>
<span class="t" style="left:770.87px;top:319.00px;font-size:13px;line-height:13px;color:#000000;transform:scaleX(0.9800);">341</span>
<span class="t" style="left:42.91px;top:339.00px;font-size:13px;line-height:13px;color:#000000;transform:scaleX(0.9800);">25</span>
<span class="t" style="left:76.16px;top:339.00px;font-size:13px;line-height:13px;color:#000000;transform:scaleX(1.0415);">Hoàng Hải Minh</span>
<span class="t" style="left:252.46px;top:339.00px;font-size:13px;line-height:13px;color:#000000;transform:scaleX(1.0447);">Nam</span>
<span class="t" style="left:331.20px;top:339.00px;font-size:13px;line-height:13px;color:#000000;transform:scaleX(1.0073);">274 Phủ Thượng Đoạn-Đông Hải-HA</span>
<span class="t" style="left:633.47px;top:339.00px;font-size:13px;line-height:13px;color:#000000;transform:scaleX(1.0547);">23/10/1986</span>
<span class="t" style="left:770.87px;top:339.00px;font-size:13px;line-height:13px;color:#000000;transform:scaleX(0.9800);">220</span>
<svg class="a" style="left:0;top:0" width="865" height="546" viewBox="0 0 865 546"><rect x="173" y="336" width="1" height="17" fill="#000"/><rect x="25.95" y="314.4" width="224.7" height="46.0" fill="none" stroke="#ed1c24" stroke-width="4.7"/></svg>
</body></html>
